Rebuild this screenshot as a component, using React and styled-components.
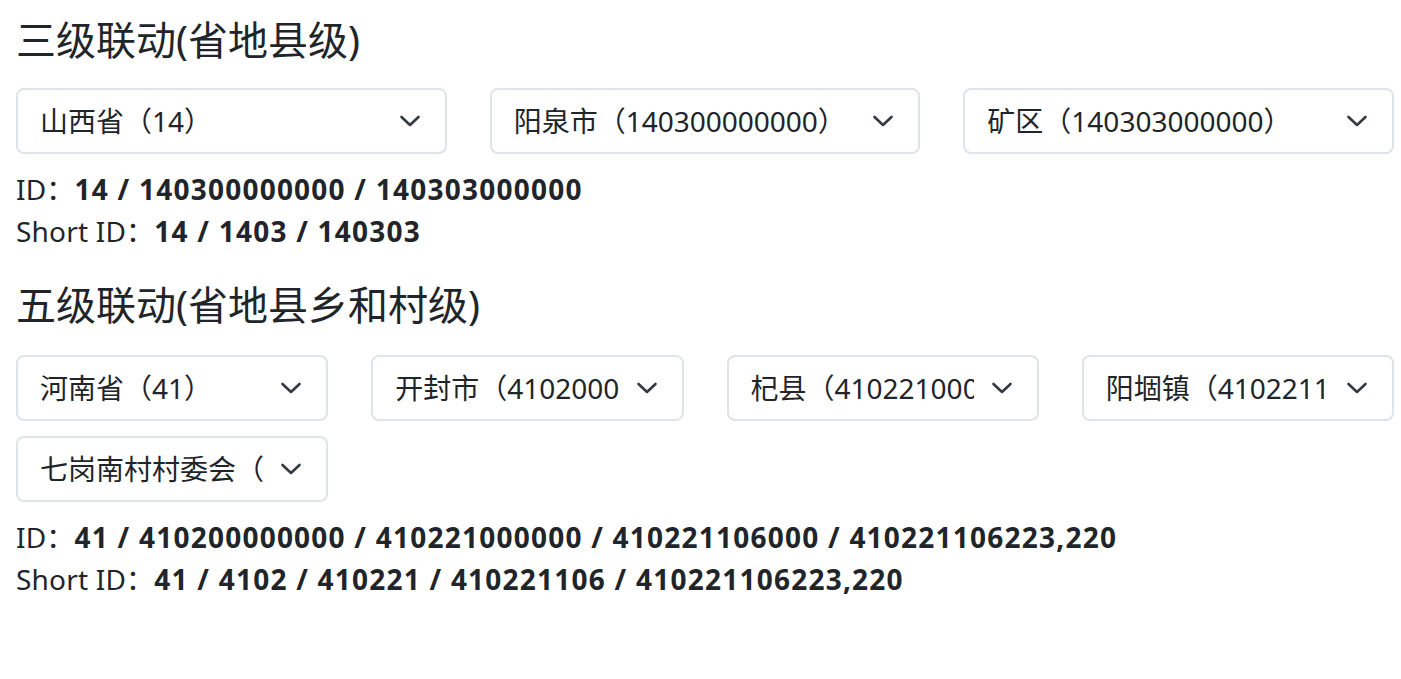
import React from "react";
import styled, { createGlobalStyle } from "styled-components";

const GlobalStyle = createGlobalStyle`
  html, body {
    margin: 0;
    padding: 0;
    background: #fff;
  }
  body {
    font-family: "Noto Sans", "Noto Sans CJK SC", sans-serif;
    color: #212529;
  }
`;

const Page = styled.div`
  padding: 16px 7px 40px 16px;
`;

const Title = styled.h2`
  margin: ${(p) => (p.$first ? "0 0 24px" : "29px 0 26px")};
  font-size: 40px;
  line-height: 48px;
  font-weight: 400;
`;

const SelectGrid = styled.div`
  display: grid;
  grid-template-columns: repeat(${(p) => p.$cols}, 1fr);
  column-gap: 43px;
  row-gap: 15px;
`;

const SelectWrap = styled.div`
  position: relative;
  min-width: 0;
`;

const Select = styled.select`
  display: block;
  width: 100%;
  box-sizing: border-box;
  appearance: none;
  -webkit-appearance: none;
  height: 66px;
  padding: 10px 63px 10px 22px;
  font-family: "Noto Sans", "Noto Sans CJK SC", sans-serif;
  font-size: 28px;
  line-height: 42px;
  color: #212529;
  background: #fff;
  border: 2px solid #e0e3e7;
  border-radius: 8px;
  outline: none;
`;

const Chevron = styled.svg`
  position: absolute;
  right: 26px;
  top: 50%;
  transform: translateY(-50%);
  pointer-events: none;
`;

const Info = styled.div`
  margin-top: 14px;
  font-size: 28px;
  line-height: 42px;
  letter-spacing: 0.2px;

  b {
    font-weight: 700;
    letter-spacing: 1.23px;
  }
`;

const Dropdown = ({ value }) => (
  <SelectWrap>
    <Select defaultValue={value}>
      <option value={value}>{value}</option>
    </Select>
    <Chevron width="22" height="14" viewBox="0 0 22 14" fill="none">
      <path
        d="M2.5 3 L11 11 L19.5 3"
        stroke="#343a40"
        strokeWidth="2.6"
        strokeLinecap="round"
        strokeLinejoin="round"
      />
    </Chevron>
  </SelectWrap>
);

const three = ["山西省（14）", "阳泉市（140300000000）", "矿区（140303000000）"];
const five = [
  "河南省（41）",
  "开封市（410200000000）",
  "杞县（410221000000）",
  "阳堌镇（410221106000）",
  "七岗南村村委会（410221106223）",
];

export default function App() {
  return (
    <Page>
      <GlobalStyle />
      <Title $first>三级联动(省地县级)</Title>
      <SelectGrid $cols={3}>
        {three.map((v) => (
          <Dropdown key={v} value={v} />
        ))}
      </SelectGrid>
      <Info>
        <div>
          ID：<b>14 / 140300000000 / 140303000000</b>
        </div>
        <div>
          Short ID：<b>14 / 1403 / 140303</b>
        </div>
      </Info>

      <Title>五级联动(省地县乡和村级)</Title>
      <SelectGrid $cols={4}>
        {five.map((v) => (
          <Dropdown key={v} value={v} />
        ))}
      </SelectGrid>
      <Info>
        <div>
          ID：<b>41 / 410200000000 / 410221000000 / 410221106000 / 410221106223,220</b>
        </div>
        <div>
          Short ID：<b>41 / 4102 / 410221 / 410221106 / 410221106223,220</b>
        </div>
      </Info>
    </Page>
  );
}
